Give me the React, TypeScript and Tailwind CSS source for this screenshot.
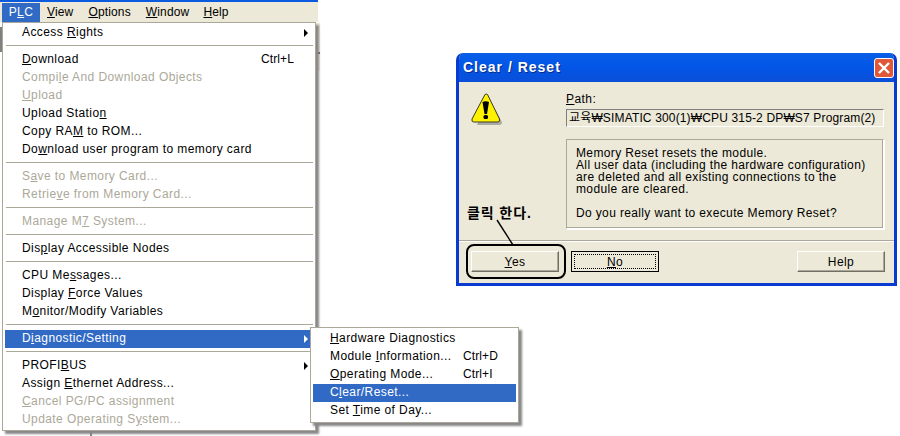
import type { ReactNode } from "react";

type Item = {
  label: ReactNode;
  shortcut?: string;
  disabled?: boolean;
  active?: boolean;
  arrow?: boolean;
};

const SEP = "sep" as const;

const plcMenu: (Item | typeof SEP)[] = [
  { label: <>Access <u>R</u>ights</>, arrow: true },
  SEP,
  { label: <><u>D</u>ownload</>, shortcut: "Ctrl+L" },
  { label: <>Compi<u>l</u>e And Download Objects</>, disabled: true },
  { label: <><u>U</u>pload</>, disabled: true },
  { label: <>Upload Statio<u>n</u></> },
  { label: <>Copy RA<u>M</u> to ROM...</> },
  { label: <>Do<u>w</u>nload user program to memory card</> },
  SEP,
  { label: <>S<u>a</u>ve to Memory Card...</>, disabled: true },
  { label: <>Retrie<u>v</u>e from Memory Card...</>, disabled: true },
  SEP,
  { label: <>Manage M<u>7</u> System...</>, disabled: true },
  SEP,
  { label: <>Dis<u>p</u>lay Accessible Nodes</> },
  SEP,
  { label: <>CPU Me<u>s</u>sages...</> },
  { label: <>Display <u>F</u>orce Values</> },
  { label: <>M<u>o</u>nitor/Modify Variables</> },
  SEP,
  { label: <>D<u>i</u>agnostic/Setting</>, active: true, arrow: true },
  SEP,
  { label: <>PROFI<u>B</u>US</>, arrow: true },
  { label: <>Assign <u>E</u>thernet Address...</> },
  { label: <><u>C</u>ancel PG/PC assignment</>, disabled: true },
  { label: <>Update Operating S<u>y</u>stem...</>, disabled: true },
];

const subMenu: Item[] = [
  { label: <><u>H</u>ardware Diagnostics</> },
  { label: <>Module <u>I</u>nformation...</>, shortcut: "Ctrl+D" },
  { label: <><u>O</u>perating Mode...</>, shortcut: "Ctrl+I" },
  { label: <>C<u>l</u>ear/Reset...</>, active: true },
  { label: <>Set <u>T</u>ime of Day...</> },
];

function MenuRow({ item, sub }: { item: Item; sub?: boolean }) {
  const color = item.active ? "bg-[#316ac5] text-white" : item.disabled ? "text-[#aca899]" : "text-black";
  return (
    <div className={`relative flex h-[18px] items-center pb-[2px] pl-[17px] ${color}`}>
      <span>{item.label}</span>
      {item.shortcut && (
        <span className={`absolute top-0 leading-[16px] tracking-[0.1px] ${sub ? "left-[150px]" : "left-[256px]"}`}>
          {item.shortcut}
        </span>
      )}
      {item.arrow && (
        <span
          className={`absolute right-[6px] top-[5px] h-0 w-0 border-y-[4px] border-l-[4px] border-y-transparent ${
            item.active ? "border-l-white" : "border-l-black"
          }`}
        />
      )}
    </div>
  );
}

function WarningIcon() {
  return (
    <svg width="32" height="34" viewBox="0 0 32 34">
      <path d="M18 6 L31 29 Q31 32 28 32 L6 32 Z" fill="#8f8f8f" opacity="0.7" />
      <path d="M14 1.5 Q15 0.5 16.5 1.5 L28.5 26 Q29 29 27 29 L2.5 29 Q0.5 29 1 26 Z" fill="#fff200" stroke="#3a3a2a" strokeWidth="1" />
      <path d="M11.5 9 Q14.5 7.5 18 9 L16 21 H13.5 Z" fill="#000" />
      <rect x="12.5" y="22" width="4.5" height="4" rx="1.5" fill="#000" />
    </svg>
  );
}

function DlgButton({ children, focus }: { children: ReactNode; focus?: boolean }) {
  if (focus) {
    return (
      <div className="flex h-[21px] w-[88px] items-center justify-center border border-black bg-[#ece9d8] p-[2px]">
        <div className="flex h-full w-full items-center justify-center border border-dotted border-black">{children}</div>
      </div>
    );
  }
  return (
    <div className="flex h-[21px] w-[88px] items-center justify-center border border-b-[#716f64] border-l-white border-r-[#716f64] border-t-white bg-[#ece9d8] shadow-[inset_-1px_-1px_0_#aca899]">
      {children}
    </div>
  );
}

export default function App() {
  return (
    <div
      className="relative h-[436px] w-[900px] overflow-hidden bg-white text-[12px] tracking-[0.42px] text-black"
      style={{ fontFamily: '"Liberation Sans", "Noto Sans CJK KR", sans-serif' }}
    >
      {/* menu bar */}
      <div className="h-[2px] w-[318px] bg-[#0a5be0]" />
      <div className="flex h-[20px] w-[318px] items-center bg-[#ece9d8] pl-[2px] tracking-[0.15px]">
        <div className="flex h-[19px] w-[38px] items-center justify-center bg-[#316ac5] tracking-[0.42px] text-white">
          P<u>L</u>C
        </div>
        <span className="ml-[7px]"><u>V</u>iew</span>
        <span className="ml-[15px]"><u>O</u>ptions</span>
        <span className="ml-[15px]"><u>W</u>indow</span>
        <span className="ml-[14px]"><u>H</u>elp</span>
      </div>

      {/* window behind the menu */}
      <div className="absolute left-0 top-[27px] h-[25px] w-[2px] bg-[#808080]" />
      <div className="absolute left-[316px] top-[23px] h-[48px] w-[4px] bg-[#ece9d8]" />
      <div className="absolute left-[316px] top-[52px] h-[2px] w-[4px] bg-[#555]" />
      <div className="absolute left-[90px] top-[430px] h-[6px] w-[2px] bg-[#808080]" />

      {/* PLC menu */}
      <div className="absolute left-[2px] top-[22px] w-[314px] border border-[#aca899] bg-white py-[1px] pl-[2px] pr-[1px] shadow-[3px_3px_2px_#888]">
        {plcMenu.map((item, i) =>
          item === SEP ? (
            <div key={i} className="mx-[1px] h-[9px] pt-[3px]">
              <div className="h-px w-full bg-[#aca899]" />
            </div>
          ) : (
            <MenuRow key={i} item={item} />
          )
        )}
      </div>

      {/* Diagnostic/Setting submenu */}
      <div className="absolute left-[310px] top-[327px] w-[209px] border border-[#aca899] bg-white p-[2px] shadow-[3px_3px_2px_#888]">
        {subMenu.map((item, i) => (
          <MenuRow key={i} item={item} sub />
        ))}
      </div>

      {/* Clear / Reset dialog */}
      <div className="absolute left-[456px] top-[53px] flex h-[233px] w-[441px] flex-col overflow-hidden rounded-t-[7px] border-x-[3px] border-b-[3px] border-[#0a3bd0] bg-[#ece9d8]">
        <div className="-mx-[3px] flex h-[29px] shrink-0 items-center justify-between bg-gradient-to-b from-[#0a5fe8] via-[#0255e6] to-[#0a4fd8] pl-[7px] pr-[3px]">
          <span className="text-[14px] font-bold tracking-[1px] text-white [text-shadow:1px_1px_0_#0a2a80]">Clear / Reset</span>
          <div className="flex h-[20px] w-[20px] items-center justify-center rounded-[3px] border border-white bg-[#e0583a]">
            <svg width="14" height="14" viewBox="0 0 14 14">
              <path d="M2 2 L12 12 M12 2 L2 12" stroke="#fff" strokeWidth="2.4" />
            </svg>
          </div>
        </div>

        <div className="flex h-[158px] shrink-0">
          <div className="w-[107px] pl-[12px] pt-[11px]">
            <WarningIcon />
          </div>
          <div className="w-[318px] pt-[8px]">
            <div className="h-[19px] leading-[18px]"><u>P</u>ath:</div>
            <div className="flex h-[18px] items-center whitespace-nowrap border border-b-white border-l-[#808080] border-r-white border-t-[#808080] pl-[2px] pb-[1px] tracking-[0.15px]">
              교육₩SIMATIC 300(1)₩CPU 315-2 DP₩S7 Program(2)
            </div>
            <div className="mt-[12px] h-[90px] border border-b-white border-l-[#aca899] border-r-white border-t-[#aca899] px-[9px] pt-[7px] leading-[12px] tracking-[0.36px] shadow-[inset_-1px_-1px_0_#aca899,1px_1px_0_#fff]">
              <div>Memory Reset resets the module.</div>
              <div>All user data (including the hardware configuration)</div>
              <div>are deleted and all existing connections to the</div>
              <div>module are cleared.</div>
              <div className="mt-[12px]">Do you really want to execute Memory Reset?</div>
            </div>
          </div>
        </div>

        <div className="h-[2px] shrink-0 border-y border-b-white border-t-[#aca899]" />

        <div className="flex items-center pl-[12px] pt-[9px]">
          <DlgButton><span><u>Y</u>es</span></DlgButton>
          <div className="ml-[12px]"><DlgButton focus><span><u>N</u>o</span></DlgButton></div>
          <div className="ml-[138px]"><DlgButton><span>Help</span></DlgButton></div>
        </div>
      </div>

      {/* annotation */}
      <div className="absolute left-[467px] top-[203px] text-[14px] font-bold tracking-[0.9px]">클릭 한다.</div>
      <svg className="absolute left-[490px] top-[215px]" width="30" height="34" viewBox="0 0 30 34">
        <path d="M7 5 L23 30" stroke="#000" strokeWidth="1.4" fill="none" />
      </svg>
      <div className="absolute left-[466px] top-[244px] h-[35px] w-[100px] rounded-[8px] border-2 border-black" />
    </div>
  );
}
